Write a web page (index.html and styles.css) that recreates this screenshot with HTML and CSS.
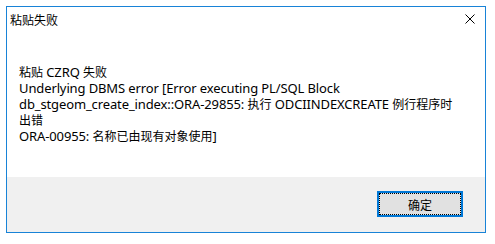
FILE: index.html
```html
<!DOCTYPE html>
<html>
  <head>
    <title>粘贴失败</title>
    <link rel="stylesheet" href="styles.css">
  </head>
  <body>
    <div class="window">
      <div class="titlebar">
        <span class="title">粘贴失败</span>
        <span class="close">
          <svg width="10" height="10" viewBox="0 0 10 10">
            <path d="M0.5 0.5 L9.5 9.5 M9.5 0.5 L0.5 9.5" stroke="#000" stroke-width="1" fill="none" />
          </svg>
        </span>
      </div>
      <div class="content">
        <p><span class="cjk">粘贴</span> CZRQ <span class="cjk">失败</span></p>
        <p>Underlying DBMS error [Error executing PL/SQL Block</p>
        <p>db_stgeom_create_index::ORA-29855: <span class="cjk">执行</span> ODCIINDEXCREATE <span class="cjk">例行程序时</span></p>
        <p><span class="cjk">出错</span></p>
        <p>ORA-00955: <span class="cjk">名称已由现有对象使用</span>]</p>
      </div>
      <div class="footer">
        <button class="ok-button"><span>确定</span></button>
      </div>
    </div>
  </body>
</html>
```

FILE: styles.css
```css
body {
  margin: 0;
  background: #fff;
  font-family: "Noto Sans", "Noto Sans CJK SC", sans-serif;
  font-size: 12px;
  color: #000;
}

.window {
  margin: 6px 0 0 6px;
  width: 478px;
  height: 225px;
  border: 1px solid #1883d7;
  display: flex;
  flex-direction: column;
}

.titlebar {
  height: 24px;
  display: flex;
  align-items: center;
  justify-content: space-between;
  padding: 0 10px 0 3px;
}

.title {
  font-family: "Noto Sans CJK SC", sans-serif;
}

.close {
  display: flex;
}

.content {
  flex: 1;
  padding: 33px 12px 0 12px;
  font-size: 13px;
  letter-spacing: -0.12px;
}

.content p {
  margin: 0;
  line-height: 16px;
  white-space: nowrap;
}

.cjk {
  font-family: "Noto Sans CJK SC", sans-serif;
  font-size: 12px;
  letter-spacing: 0;
}

.footer {
  height: 55px;
  background: #f0f0f0;
  display: flex;
  justify-content: flex-end;
  align-items: flex-start;
  padding: 14px 22px 0 0;
  box-sizing: border-box;
}

.ok-button {
  width: 86px;
  height: 26px;
  border: 2px solid #0078d7;
  background: #e1e1e1;
  padding: 0;
  font-family: "Noto Sans CJK SC", sans-serif;
  font-size: 12px;
  color: #000;
}

.ok-button span {
  display: flex;
  align-items: center;
  justify-content: center;
  height: 100%;
  border: 1px dotted #000;
  box-sizing: border-box;
}
```
